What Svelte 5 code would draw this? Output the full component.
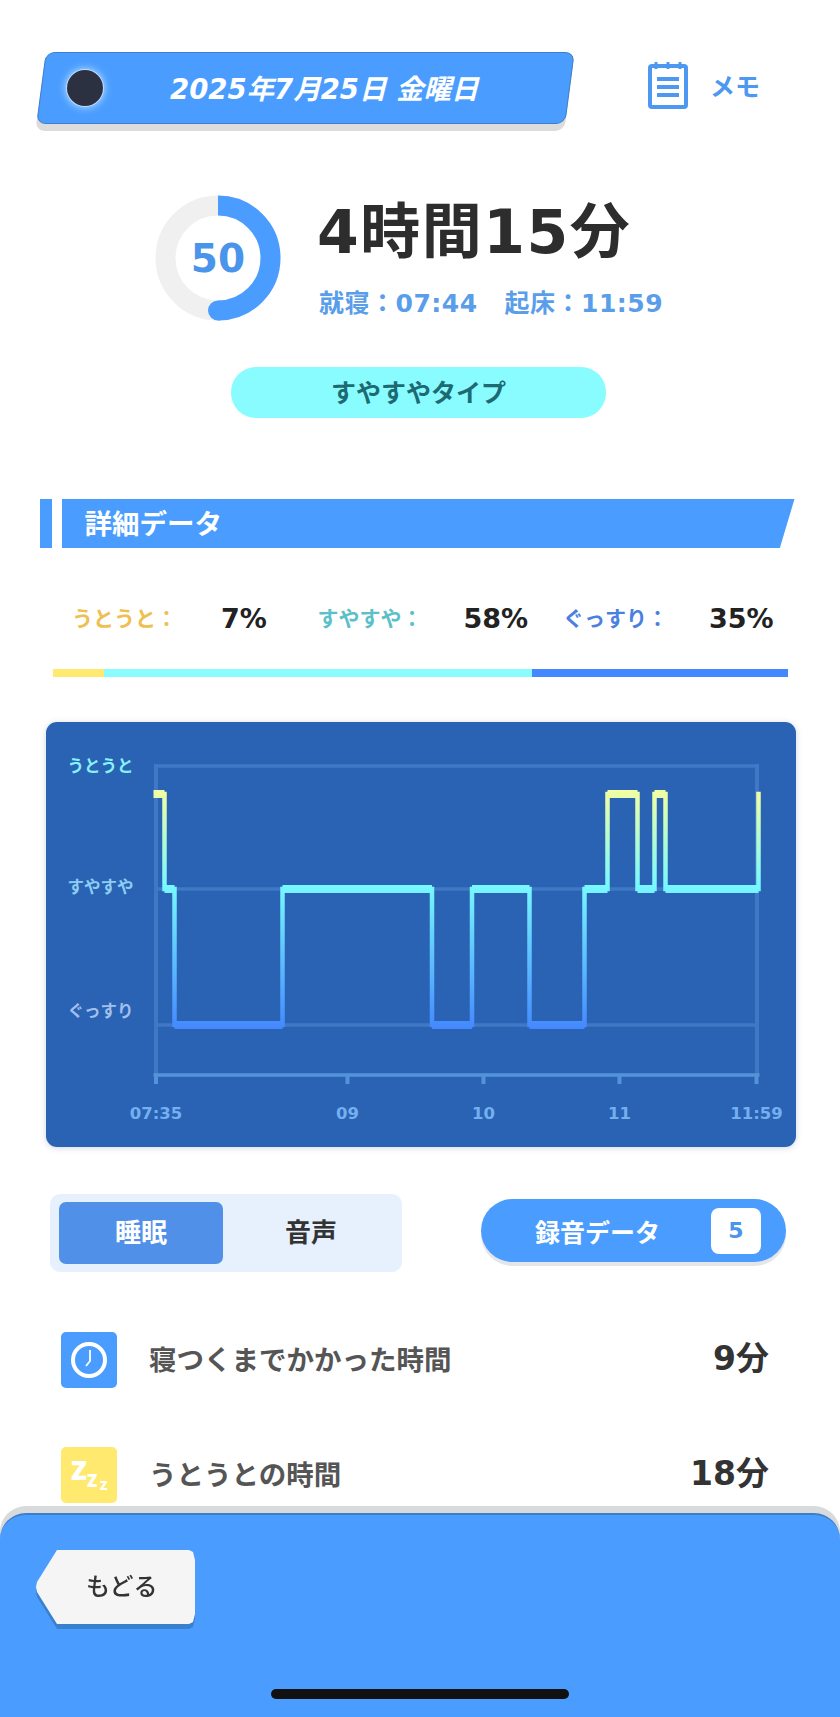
<script>
  const legend = [
    { label: 'うとうと：', value: '7%', tone: 'light' },
    { label: 'すやすや：', value: '58%', tone: 'mid' },
    { label: 'ぐっすり：', value: '35%', tone: 'deep' }
  ];

  // y levels of the sleep chart, in page coordinates
  const TOP = 794;
  const MID = 889;
  const LOW = 1025;

  const steps = [
    [153, TOP], [164, MID], [174, LOW], [282, MID], [431.5, LOW], [471.5, MID],
    [529, LOW], [584, MID], [607, TOP], [637, MID], [654, TOP], [665, MID], [758, TOP]
  ];

  const flats = steps.slice(0, -1).map((s, i) => `M${s[0]} ${s[1]}H${steps[i + 1][0]}`).join('');
  const risers = steps.slice(1).map((s, i) => `M${s[0]} ${steps[i][1]}V${s[1]}`).join('');

  const grid = [766, 889, 1025];
  const ticks = [
    { x: 155.5, label: '07:35' },
    { x: 347, label: '09' },
    { x: 483, label: '10' },
    { x: 619, label: '11' },
    { x: 756, label: '11:59' }
  ];
  const levels = [
    { y: 766, label: 'うとうと', fill: '#86f3f8' },
    { y: 887, label: 'すやすや', fill: '#8ecdf3' },
    { y: 1011, label: 'ぐっすり', fill: '#a3bfec' }
  ];
</script>

<div class="page">
  <header class="top">
    <div class="date">
      <span class="moon"></span>
      <span class="date-text">2025年7月25日 金曜日</span>
    </div>
    <div class="memo">
      <svg width="40" height="48" viewBox="0 0 40 48" fill="none" stroke="#4d98f0" stroke-width="4">
        <rect x="2" y="5" width="36" height="41" rx="2" />
        <path d="M8 1v7M20 1v7M32 1v7" stroke-width="3" />
        <path d="M9 18h22M9 26h22M9 34h22" />
      </svg>
      <span>メモ</span>
    </div>
  </header>

  <section class="hero">
    <div class="ring">
      <svg width="126" height="126" viewBox="0 0 126 126" fill="none" stroke-width="20">
        <circle cx="63" cy="63" r="52.5" stroke="#f0f0f0" />
        <path d="M63 10.5A52.5 52.5 0 0 1 63 115.5" stroke="#4a9dff" />
        <circle cx="63" cy="115.5" r="10" fill="#4a9dff" stroke="none" />
      </svg>
      <span class="score">50</span>
    </div>
    <div class="hero-text">
      <div class="duration">4時間15分</div>
      <div class="times">就寝：07:44<span class="wake">起床：11:59</span></div>
    </div>
  </section>

  <div class="type-pill">すやすやタイプ</div>

  <h2 class="section-title">
    <span class="title-mark"></span>
    <span class="title-bar">詳細データ</span>
  </h2>

  <div class="legend">
    {#each legend as item}
      <div class="legend-item {item.tone}">
        <span class="legend-label">{item.label}</span>
        <span class="legend-value">{item.value}</span>
      </div>
    {/each}
  </div>

  <div class="ratio">
    <span class="ratio-light"></span>
    <span class="ratio-mid"></span>
    <span class="ratio-deep"></span>
  </div>

  <div class="chart">
    <svg width="750" height="425" viewBox="45.5 722 750 425" fill="none">
      <defs>
        <linearGradient id="sleep" gradientUnits="userSpaceOnUse" x1="0" y1="790" x2="0" y2="1029">
          <stop offset="0" stop-color="#f2ffa2" />
          <stop offset="0.4" stop-color="#78f8ff" />
          <stop offset="1" stop-color="#4488ff" />
        </linearGradient>
      </defs>

      {#each grid as y}
        <line x1="153.5" x2="758.5" y1={y} y2={y} stroke="#3f78c4" stroke-width="3.5" />
      {/each}
      <line x1="155.5" x2="155.5" y1="764" y2="1075" stroke="#3f78c4" stroke-width="4" />
      <line x1="756.5" x2="756.5" y1="764" y2="1075" stroke="#3f78c4" stroke-width="4" />
      <line x1="153" x2="759" y1="1075" y2="1075" stroke="#5493da" stroke-width="3.5" />
      {#each ticks as tick}
        <line x1={tick.x} x2={tick.x} y1="1075" y2="1084" stroke="#5493da" stroke-width="4" />
        <text class="tick" x={tick.x} y="1119" text-anchor="middle">{tick.label}</text>
      {/each}
      {#each levels as level}
        <text class="level" x="100" y={level.y + 6} text-anchor="middle" fill={level.fill}>{level.label}</text>
      {/each}

      <path d={flats} stroke="url(#sleep)" stroke-width="8" />
      <path d={risers} stroke="url(#sleep)" stroke-width="4.5" stroke-linecap="square" />
    </svg>
  </div>

  <div class="controls">
    <div class="tabs">
      <span class="tab active">睡眠</span>
      <span class="tab">音声</span>
    </div>
    <div class="record">
      <span>録音データ</span>
      <span class="badge">5</span>
    </div>
  </div>

  <div class="stats">
    <div class="stat">
      <span class="stat-icon clock">
        <svg width="38" height="38" viewBox="0 0 38 38" fill="none" stroke="#fff">
          <circle cx="19" cy="19" r="16" stroke-width="4" />
          <path d="M20 9v11l-4 5" stroke-width="1.8" />
        </svg>
      </span>
      <span class="stat-label">寝つくまでかかった時間</span>
      <span class="stat-value">9分</span>
    </div>
    <div class="stat">
      <span class="stat-icon zzz"><b class="z1">Z</b><b class="z2">Z</b><b class="z3">Z</b></span>
      <span class="stat-label">うとうとの時間</span>
      <span class="stat-value">18分</span>
    </div>
  </div>

  <footer class="footer">
    <div class="back">
      <div class="back-shape">もどる</div>
    </div>
    <div class="home-bar"></div>
  </footer>
</div>

<style>
  :global(body) {
    margin: 0;
    background: #fff;
  }

  .page {
    position: relative;
    width: 840px;
    height: 1717px;
    overflow: hidden;
    background: #fff;
    /* wide latin digits come from DejaVu, everything else from the CJK face */
    font-family: "DejaVu Sans", "Noto Sans CJK JP", sans-serif;
    font-weight: 700;
    color: #333;
  }

  .top {
    display: flex;
    align-items: center;
    height: 72px;
    padding: 52px 0 0 36px;
  }

  .date {
    position: relative;
    display: flex;
    align-items: center;
    width: 539px;
    height: 72px;
  }

  .date::before {
    content: '';
    position: absolute;
    inset: 0 5px;
    background: #4a9dff;
    border: 1px solid #3b7ec9;
    border-radius: 9px;
    transform: skewX(-7.5deg);
    box-shadow: 0 7px 0 #dcdcdc;
  }

  .moon {
    position: relative;
    width: 36px;
    height: 36px;
    margin-left: 31px;
    border-radius: 50%;
    background: #2c3142;
    box-shadow: 0 0 0 1px #bcdcff, 0 0 7px 2px #a8d4ff;
  }

  .date-text {
    position: relative;
    margin: 4px 0 0 67px;
    font-size: 27.5px;
    line-height: 1;
    font-style: italic;
    color: #fff;
    white-space: nowrap;
  }

  .memo {
    display: flex;
    align-items: center;
    gap: 22px;
    margin: -6px 0 0 73px;
    font-size: 25px;
    color: #4d98f0;
  }

  .hero {
    display: flex;
    gap: 36px;
    margin: 71px 0 0 155px;
    height: 125px;
  }

  .ring {
    position: relative;
    width: 126px;
    height: 126px;
  }

  .score {
    position: absolute;
    inset: 0;
    display: flex;
    align-items: center;
    justify-content: center;
    font-size: 39px;
    color: #4a94ec;
  }

  .duration {
    height: 91px;
    font-size: 60px;
    line-height: 75px;
    letter-spacing: 1.5px;
    color: #2d2d2d;
    white-space: nowrap;
  }

  .times {
    padding-left: 2px;
    font-size: 25px;
    line-height: 36px;
    letter-spacing: 0.5px;
    color: #5a9eea;
    white-space: nowrap;
  }

  .wake {
    margin-left: 27px;
  }

  .type-pill {
    width: 375px;
    height: 51px;
    margin: 47px 0 0 231px;
    border-radius: 25px;
    background: #88fcff;
    color: #1d6a72;
    font-size: 25px;
    line-height: 54px;
    text-align: center;
  }

  .section-title {
    display: flex;
    gap: 10px;
    height: 49px;
    margin: 81px 0 0 39.5px;
    font-size: 27.5px;
    font-weight: 700;
    color: #fff;
  }

  .title-mark {
    width: 12px;
    background: #4a9dff;
  }

  .title-bar {
    width: 733px;
    padding-left: 23px;
    box-sizing: border-box;
    line-height: 51px;
    background: #4a9dff;
    clip-path: polygon(0 0, 100% 0, 98% 100%, 0 100%);
  }

  .legend {
    display: flex;
    height: 36px;
    margin: 50px 0 0 72px;
    align-items: center;
  }

  .legend-item {
    display: flex;
    align-items: center;
    width: 245.5px;
  }

  .legend-label {
    width: 146px;
    margin-top: 2px;
    font-size: 21px;
  }

  .legend-value {
    margin-top: 4px;
    font-size: 27px;
    color: #222;
  }

  .legend-item:first-child .legend-value {
    margin-left: 3px;
  }

  .light .legend-label {
    color: #eec050;
  }

  .mid .legend-label {
    color: #5cc0c8;
  }

  .deep .legend-label {
    color: #4a80e0;
  }

  .ratio {
    display: flex;
    width: 735px;
    height: 8px;
    margin: 35px 0 0 53px;
  }

  .ratio-light {
    width: 51px;
    background: #ffe96e;
  }

  .ratio-mid {
    width: 428px;
    background: #88fcff;
  }

  .ratio-deep {
    flex: 1;
    background: #4488ff;
  }

  .chart {
    width: 750px;
    height: 425px;
    margin: 45px 0 0 45.5px;
    border-radius: 11px;
    background: #2a63b3;
    box-shadow: 0 1px 6px rgba(40, 70, 120, 0.22);
    overflow: hidden;
  }

  .chart svg {
    display: block;
  }

  .tick {
    font-size: 16.5px;
    font-weight: 700;
    fill: #74aff0;
  }

  .level {
    font-size: 16.5px;
    font-weight: 700;
  }

  .controls {
    display: flex;
    justify-content: space-between;
    width: 736px;
    height: 78px;
    margin: 47px 0 0 50px;
  }

  .tabs {
    display: flex;
    box-sizing: border-box;
    width: 352px;
    padding: 8px 9px;
    border-radius: 10px;
    background: #e6f1fd;
  }

  .tab {
    flex: 1;
    padding-left: 6px;
    border-radius: 7px;
    font-size: 26px;
    line-height: 62px;
    text-align: center;
    color: #333;
  }

  .tab.active {
    flex: 0 0 164px;
    padding-left: 0;
    background: #5090e8;
    color: #fff;
  }

  .record {
    display: flex;
    align-items: center;
    justify-content: space-between;
    box-sizing: border-box;
    width: 305px;
    height: 63px;
    margin-top: 5px;
    padding: 0 25px 0 54px;
    border-radius: 32px;
    background: #4a9dff;
    box-shadow: 0 4px 0 #e4e6ea;
    font-size: 25px;
    color: #fff;
  }

  .badge {
    width: 50px;
    height: 46px;
    border-radius: 8px;
    background: #fff;
    color: #4a94ec;
    font-size: 22px;
    line-height: 46px;
    text-align: center;
  }

  .stats {
    display: flex;
    flex-direction: column;
    gap: 60px;
    width: 708px;
    margin: 60px 0 0 61px;
  }

  .stat {
    display: flex;
    align-items: center;
    height: 55px;
  }

  .stat-icon {
    display: flex;
    align-items: center;
    justify-content: center;
    flex: none;
    width: 56px;
    height: 56px;
    border-radius: 5px;
  }

  .clock {
    background: #4a9dff;
  }

  .zzz {
    position: relative;
    background: #ffe96e;
    color: #fff;
  }

  .zzz b {
    position: absolute;
    line-height: 1;
    font-family: "Noto Sans", sans-serif;
  }

  .z1 {
    left: 10px;
    top: 10px;
    font-size: 26px;
  }

  .z2 {
    left: 26px;
    top: 25px;
    font-size: 17px;
  }

  .z3 {
    left: 39px;
    top: 33px;
    font-size: 12px;
  }

  .stat-label {
    flex: 1;
    margin-left: 32px;
    margin-bottom: 3px;
    font-size: 27.5px;
    color: #555;
  }

  .stat-value {
    margin-bottom: 7px;
    font-size: 33px;
    color: #333;
  }

  .footer {
    position: absolute;
    left: 0;
    right: 0;
    bottom: 0;
    height: 204px;
    border-radius: 26px 26px 0 0;
    background: #4a9dff;
    border-top: 2px solid #3b7ec9;
    box-sizing: border-box;
    box-shadow: 0 -7px 0 #d9dadc;
  }

  .back {
    position: absolute;
    left: 36px;
    top: 35px;
    filter: drop-shadow(0 5px 0 #3a80d0);
  }

  .back-shape {
    box-sizing: border-box;
    width: 159px;
    height: 74px;
    padding-left: 50px;
    background: #f5f5f5;
    font-size: 24px;
    font-weight: 500;
    line-height: 74px;
    color: #333;
    clip-path: polygon(21px 0, 153px 0, 157px 2px, 159px 10px, 159px 64px, 157px 72px, 153px 74px, 21px 74px, 1px 42px, 0 37px, 1px 32px);
  }

  .home-bar {
    position: absolute;
    left: 270.5px;
    top: 174px;
    width: 298.5px;
    height: 10px;
    border-radius: 5px;
    background: #111;
  }
</style>
